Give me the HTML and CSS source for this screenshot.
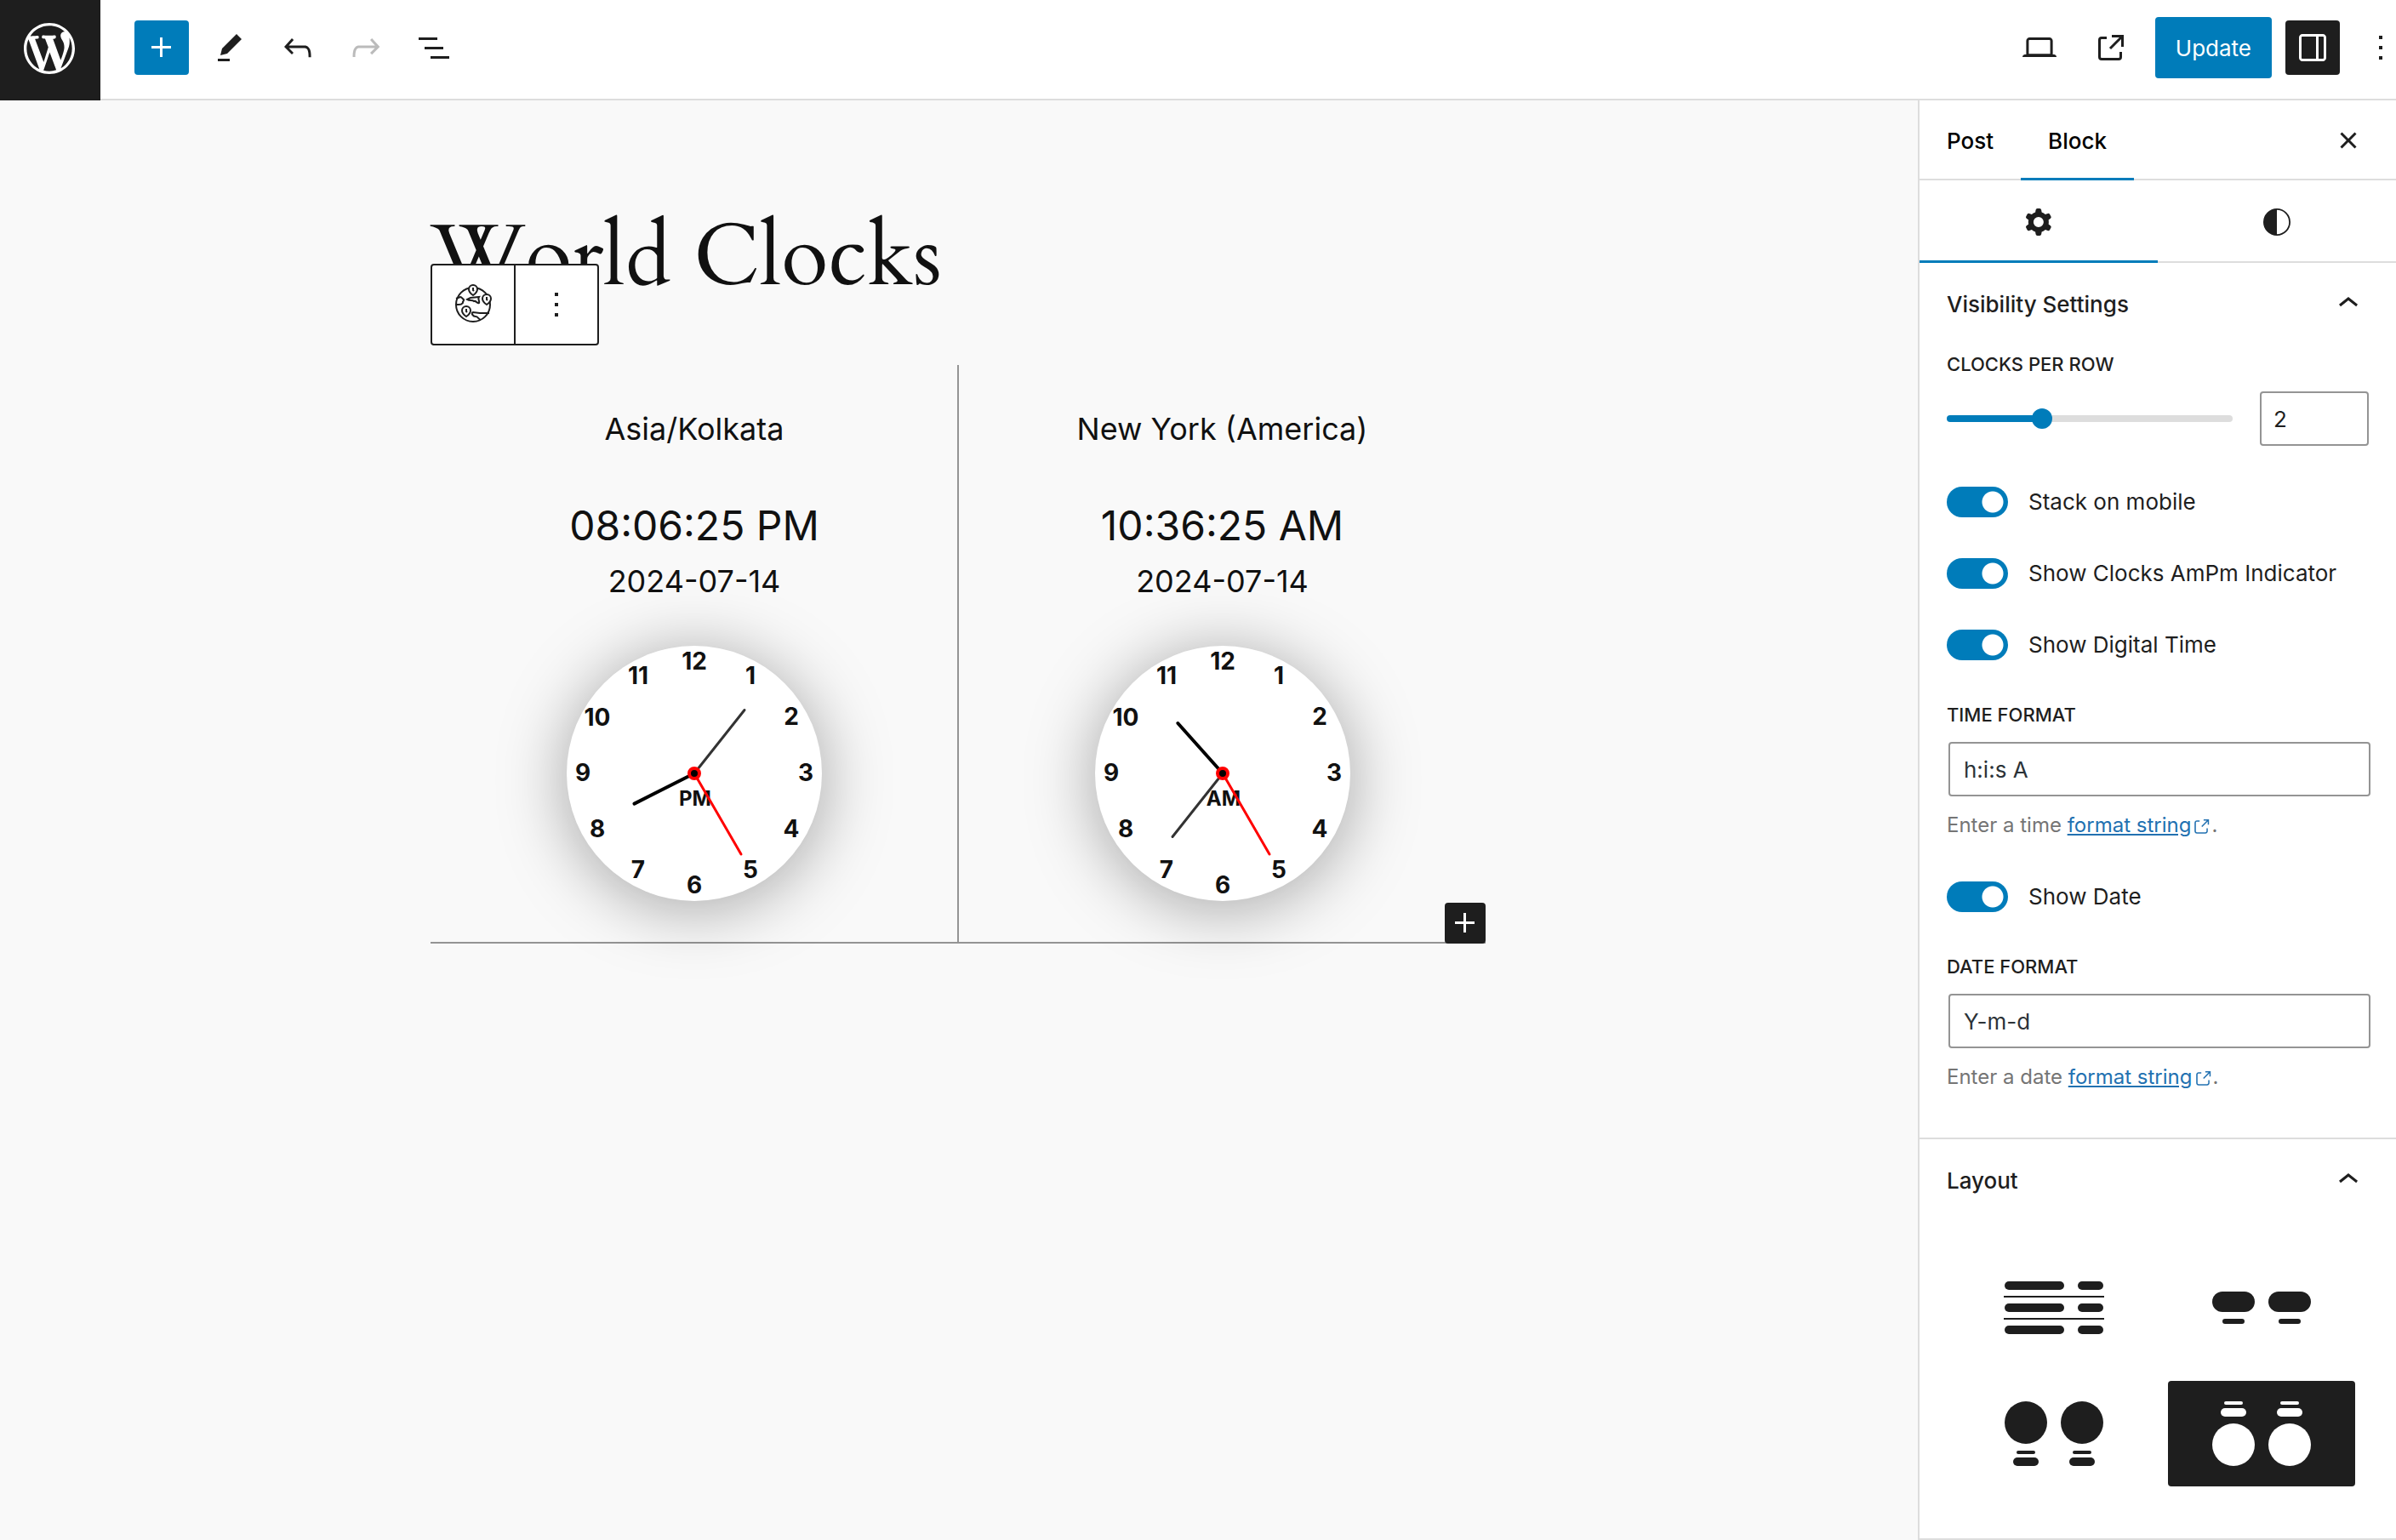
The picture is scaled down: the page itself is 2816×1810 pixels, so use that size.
FILE: index.html
```
<!DOCTYPE html>
<html lang="en">
<head>
<meta charset="utf-8">
<meta name="viewport" content="width=device-width, initial-scale=1">
<title>Edit Post: World Clocks</title>
<link rel="stylesheet" href="styles.css">
</head>
<body>
<div class="editor">
  <header class="topbar">
    <a class="topbar__home" href="#" aria-label="View posts">
      <svg class="logo" viewBox="-2 -2 24 24" aria-hidden="true"><path d="M20 10c0-5.51-4.49-10-10-10C4.48 0 0 4.49 0 10c0 5.52 4.48 10 10 10 5.51 0 10-4.48 10-10zM7.78 15.37L4.37 6.22c.55-.02 1.17-.08 1.17-.08.5-.06.44-1.13-.06-1.11 0 0-1.45.11-2.37.11-.18 0-.37 0-.58-.01C4.12 2.69 6.87 1.11 10 1.11c2.33 0 4.45.87 6.05 2.34-.68-.11-1.65.39-1.65 1.58 0 .74.45 1.36.9 2.1.35.61.55 1.36.55 2.46 0 1.49-1.4 5-1.4 5l-3.03-8.37c.54-.02.82-.17.82-.17.5-.05.44-1.25-.06-1.22 0 0-1.44.12-2.38.12-.87 0-2.33-.12-2.33-.12-.5-.03-.56 1.2-.06 1.22l.92.08 1.26 3.41zM17.41 10c.24-.64.74-1.87.43-4.25.7 1.29 1.05 2.71 1.05 4.25 0 3.29-1.73 6.24-4.4 7.78.97-2.59 1.94-5.2 2.92-7.78zM6.1 18.09C3.12 16.65 1.11 13.53 1.11 10c0-1.3.23-2.48.72-3.59C3.25 10.3 4.67 14.2 6.1 18.09zm4.03-6.63l2.58 6.98c-.86.29-1.76.45-2.71.45-.79 0-1.57-.11-2.29-.33.81-2.38 1.62-4.74 2.42-7.1z"/></svg>
    </a>
    <div class="topbar__tools">
      <button class="icon-btn icon-btn--primary" type="button" aria-label="Toggle block inserter"><svg class="icon" viewBox="0 0 24 24"><path d="M11 12.5V17.5H12.5V12.5H17.5V11H12.5V6H11V11H6V12.5H11Z"/></svg></button>
      <button class="icon-btn" type="button" aria-label="Tools"><svg class="icon" viewBox="0 0 24 24"><path d="m19 7-3-3-8.5 8.5-1 4 4-1L19 7Zm-7 11.5H5V20h7v-1.5Z"/></svg></button>
      <button class="icon-btn" type="button" aria-label="Undo"><svg class="icon" viewBox="0 0 24 24"><path d="M18.3 11.7c-.6-.6-1.4-.9-2.3-.9H6.7l2.9-3.3-1.1-1-4.5 5L8.5 16l1-1-2.7-2.7H16c.5 0 .9.2 1.3.5 1 1 1 3.4 1 4.5v.3h1.5v-.2c0-1.5 0-4.3-1.5-5.7z"/></svg></button>
      <button class="icon-btn" type="button" aria-label="Redo" disabled><svg class="icon" viewBox="0 0 24 24"><path d="M15.6 6.5l-1.1 1 2.9 3.3H8c-.9 0-1.7.3-2.3.9-1.4 1.5-1.4 4.2-1.4 5.6v.2h1.5v-.3c0-1.1 0-3.5 1-4.5.3-.3.7-.5 1.3-.5h9.2L14.5 15l1.1 1.1 4.6-4.6-4.6-5z"/></svg></button>
      <button class="icon-btn" type="button" aria-label="Document overview"><svg class="icon" viewBox="0 0 24 24"><path d="M3 6h11v1.5H3V6Zm3.5 5.5h11V13h-11v-1.5ZM21 17H10v1.5h11V17Z"/></svg></button>
    </div>
    <div class="topbar__settings">
      <div class="topbar__publish">
        <button class="icon-btn" type="button" aria-label="View"><svg class="icon" viewBox="0 0 24 24"><path d="M20.5 16h-.7V8c0-1.1-.9-2-2-2H6.2c-1.1 0-2 .9-2 2v8h-.7c-.8 0-1.5.7-1.5 1.5h20c0-.8-.7-1.5-1.5-1.5zM5.7 8c0-.3.2-.5.5-.5h11.6c.3 0 .5.2.5.5v7.6H5.7V8z"/></svg></button>
        <a class="icon-btn" href="#" aria-label="View post"><svg class="icon" viewBox="0 0 24 24"><path d="M19.5 4.5h-7V6h4.44l-5.97 5.97 1.06 1.06L18 7.06v4.44h1.5v-7Zm-13 1a2 2 0 0 0-2 2v10a2 2 0 0 0 2 2h10a2 2 0 0 0 2-2v-3H17v3a.5.5 0 0 1-.5.5h-10a.5.5 0 0 1-.5-.5v-10a.5.5 0 0 1 .5-.5h3V5.5h-3Z"/></svg></a>
        <button class="update-btn" type="button">Update</button>
      </div>
      <button class="icon-btn icon-btn--pressed" type="button" aria-label="Settings" aria-pressed="true"><svg class="icon" viewBox="0 0 24 24"><path fill-rule="evenodd" d="M18 4H6c-1.1 0-2 .9-2 2v12c0 1.1.9 2 2 2h12c1.1 0 2-.9 2-2V6c0-1.1-.9-2-2-2zm-4 14.5H6c-.3 0-.5-.2-.5-.5V6c0-.3.2-.5.5-.5h8v13zm4.5-.5c0 .3-.2.5-.5.5h-2.5v-13H18c.3 0 .5.2.5.5v12z"/></svg></button>
      <button class="icon-btn" type="button" aria-label="Options"><svg class="icon" viewBox="0 0 24 24"><path d="M13 19h-2v-2h2v2zm0-6h-2v-2h2v2zm0-6h-2V5h2v2z"/></svg></button>
    </div>
  </header>

  <div class="workspace">
    <main class="canvas">
      <article class="post">
        <h1 class="post__title">World Clocks</h1>
        <section class="clocks">
          <div class="block-toolbar" role="toolbar" aria-label="Block tools">
            <button class="block-toolbar__btn" type="button" aria-label="World Clock">
              <svg class="icon icon--line" viewBox="0 0 48 48">
                <circle cx="24" cy="24" r="20"/>
                <path d="M4 17l5-2c2 0 2 2 4 3 1 2-2 2-1 4-2 3-4 2-8 2"/>
                <path d="M17 18l4-2 10-1c-2 3 1 4 0 7-3 1-3-3-6-2-2-2-5 0-8-2z"/>
                <path d="M43 34H32l-8-1c-3 1 0 5 3 5 3 0 3 3 6 4"/>
                <path class="pin" d="M24 13c-3-2-5-4-5-7a5 5 0 0 1 10 0c0 3-2 5-5 7z"/>
                <path class="pin" d="M40 24c-3-2-5-4-5-7a5 5 0 0 1 10 0c0 3-2 5-5 7z"/>
                <path class="pin" d="M16 38c-3-2-5-4-5-7a5 5 0 0 1 10 0c0 3-2 5-5 7z"/>
                <path d="M24 4v3l1 1M40 15v3l1 1M16 29v3l1 1"/>
              </svg>
            </button>
            <button class="block-toolbar__btn" type="button" aria-label="Options"><svg class="icon" viewBox="0 0 24 24"><path d="M13 19h-2v-2h2v2zm0-6h-2v-2h2v2zm0-6h-2V5h2v2z"/></svg></button>
          </div>

          <div class="clock">
            <div class="clock__name">Asia/Kolkata</div>
            <div class="clock__time">08:06:25 PM</div>
            <div class="clock__date">2024-07-14</div>
            <svg class="clock__face" viewBox="-150 -150 300 300" role="img" aria-label="Clock showing 8:06 PM">
              <g class="numerals">
                <text x="0" y="-122">12</text><text x="66" y="-105">1</text><text x="114" y="-57">2</text><text x="131" y="9">3</text><text x="114" y="75">4</text><text x="66" y="123">5</text><text x="0" y="141">6</text><text x="-66" y="123">7</text><text x="-114" y="75">8</text><text x="-131" y="9">9</text><text x="-114" y="-56">10</text><text x="-66" y="-105">11</text>
              </g>
              <text class="ampm" x="1" y="38">PM</text>
              <path class="hand hand--hour" d="M0 0L-70.5 35.6"/>
              <path class="hand hand--minute" d="M0 0L59 -74.5"/>
              <path class="hand hand--second" d="M0 0L55 95"/>
              <circle class="hub" r="6"/>
            </svg>
          </div>

          <div class="clock">
            <div class="clock__name">New York (America)</div>
            <div class="clock__time">10:36:25 AM</div>
            <div class="clock__date">2024-07-14</div>
            <svg class="clock__face" viewBox="-150 -150 300 300" role="img" aria-label="Clock showing 10:36 AM">
              <g class="numerals">
                <text x="0" y="-122">12</text><text x="66" y="-105">1</text><text x="114" y="-57">2</text><text x="131" y="9">3</text><text x="114" y="75">4</text><text x="66" y="123">5</text><text x="0" y="141">6</text><text x="-66" y="123">7</text><text x="-114" y="75">8</text><text x="-131" y="9">9</text><text x="-114" y="-56">10</text><text x="-66" y="-105">11</text>
              </g>
              <text class="ampm" x="1" y="38">AM</text>
              <path class="hand hand--hour" d="M0 0L-52.7 -59"/>
              <path class="hand hand--minute" d="M0 0L-59 74.5"/>
              <path class="hand hand--second" d="M0 0L55 95"/>
              <circle class="hub" r="6"/>
            </svg>
          </div>

          <button class="appender" type="button" aria-label="Add clock"><svg class="icon" viewBox="0 0 24 24"><path d="M11 12.5V17.5H12.5V12.5H17.5V11H12.5V6H11V11H6V12.5H11Z"/></svg></button>
        </section>
      </article>
    </main>

    <aside class="sidebar">
      <div class="tabs">
        <button class="tab" type="button">Post</button>
        <button class="tab tab--active" type="button">Block</button>
        <button class="icon-btn tabs__close" type="button" aria-label="Close settings"><svg class="icon" viewBox="0 0 24 24"><path d="M12 13.06l3.712 3.713 1.061-1.06L13.061 12l3.712-3.712-1.06-1.06L12 10.938 8.288 7.227l-1.061 1.06L10.939 12l-3.712 3.712 1.06 1.061L12 13.061z"/></svg></button>
      </div>
      <div class="icon-tabs">
        <button class="icon-tab icon-tab--active" type="button" aria-label="Settings"><svg class="icon" viewBox="0 0 24 24"><path fill-rule="evenodd" d="M10.289 4.836A1 1 0 0111.275 4h1.306a1 1 0 01.987.836l.244 1.466c.787.26 1.503.679 2.108 1.218l1.393-.522a1 1 0 011.216.437l.653 1.13a1 1 0 01-.23 1.273l-1.148.944a6.025 6.025 0 010 2.435l1.149.946a1 1 0 01.23 1.272l-.653 1.13a1 1 0 01-1.216.437l-1.394-.522c-.605.54-1.32.958-2.108 1.218l-.244 1.466a1 1 0 01-.987.836h-1.306a1 1 0 01-.986-.836l-.244-1.466a5.995 5.995 0 01-2.108-1.218l-1.394.522a1 1 0 01-1.217-.436l-.653-1.131a1 1 0 01.23-1.272l1.149-.946a6.026 6.026 0 010-2.435l-1.148-.944a1 1 0 01-.23-1.272l.653-1.131a1 1 0 011.217-.437l1.393.522a5.994 5.994 0 012.108-1.218l.244-1.466zM14.929 12a3 3 0 11-6 0 3 3 0 016 0z"/></svg></button>
        <button class="icon-tab" type="button" aria-label="Styles"><svg class="icon" viewBox="0 0 24 24"><path fill-rule="evenodd" d="M20 12a8 8 0 1 1-16 0 8 8 0 0 1 16 0Zm-.9 0a7.1 7.1 0 0 1-7.1 7.1V4.9a7.1 7.1 0 0 1 7.1 7.1Z"/></svg></button>
      </div>

      <section class="panel">
        <h2 class="panel__heading"><button class="panel__toggle" type="button" aria-expanded="true">Visibility Settings<svg class="icon" viewBox="0 0 24 24"><path d="M6.5 12.4L12 8l5.5 4.4-.9 1.2L12 10l-4.5 3.6-1-1.2z"/></svg></button></h2>
        <div class="panel__body">
          <div class="field">
            <label class="field__label" for="per-row">Clocks per row</label>
            <div class="range">
              <div class="range__track">
                <span class="range__rail"></span>
                <input class="range__input" id="per-row" type="range" min="1" max="4" value="2">
              </div>
              <input class="text-input range__number" type="text" inputmode="numeric" value="2" aria-label="Clocks per row value">
            </div>
          </div>
          <label class="toggle"><input class="toggle__input" type="checkbox" checked>Stack on mobile</label>
          <label class="toggle"><input class="toggle__input" type="checkbox" checked>Show Clocks AmPm Indicator</label>
          <label class="toggle"><input class="toggle__input" type="checkbox" checked>Show Digital Time</label>
          <div class="field">
            <label class="field__label" for="time-format">Time format</label>
            <input class="text-input text-input--format" id="time-format" type="text" value="h:i:s A">
            <p class="help">Enter a time <a class="help__link" href="#">format string</a><svg class="help__icon" viewBox="0 0 24 24" aria-hidden="true"><path d="M18.2 17c0 .7-.6 1.2-1.2 1.2H7c-.7 0-1.2-.6-1.2-1.2V7c0-.7.6-1.2 1.2-1.2h3.2V4.2H7C5.5 4.2 4.2 5.5 4.2 7v10c0 1.500 1.200 2.800 2.800 2.800h10c1.500 0 2.800-1.200 2.800-2.800v-3.600h-1.500V17zM14.900 3v1.500h3.700l-6.400 6.400 1.100 1.100 6.400-6.400v3.700h1.500V3h-6.300z"/></svg>.</p>
          </div>
          <label class="toggle"><input class="toggle__input" type="checkbox" checked>Show Date</label>
          <div class="field">
            <label class="field__label" for="date-format">Date format</label>
            <input class="text-input text-input--format" id="date-format" type="text" value="Y-m-d">
            <p class="help">Enter a date <a class="help__link" href="#">format string</a><svg class="help__icon" viewBox="0 0 24 24" aria-hidden="true"><path d="M18.2 17c0 .7-.6 1.2-1.2 1.2H7c-.7 0-1.2-.6-1.2-1.2V7c0-.7.6-1.2 1.2-1.2h3.2V4.2H7C5.5 4.2 4.2 5.5 4.2 7v10c0 1.500 1.200 2.800 2.800 2.800h10c1.500 0 2.800-1.200 2.800-2.800v-3.600h-1.500V17zM14.900 3v1.500h3.700l-6.400 6.400 1.100 1.100 6.400-6.400v3.700h1.500V3h-6.300z"/></svg>.</p>
          </div>
        </div>
      </section>

      <section class="panel">
        <h2 class="panel__heading"><button class="panel__toggle" type="button" aria-expanded="true">Layout<svg class="icon" viewBox="0 0 24 24"><path d="M6.5 12.4L12 8l5.5 4.4-.9 1.2L12 10l-4.5 3.6-1-1.2z"/></svg></button></h2>
        <div class="layouts">
          <button class="layout-btn" type="button" aria-label="List">
            <svg class="layout-btn__art" viewBox="0 0 120 80"><rect x="2" y="9" width="70" height="10" rx="5"/><rect x="88" y="9" width="30" height="10" rx="5"/><rect x="1" y="26" width="118" height="2"/><rect x="2" y="35" width="70" height="10" rx="5"/><rect x="88" y="35" width="30" height="10" rx="5"/><rect x="1" y="52" width="118" height="2"/><rect x="2" y="61" width="70" height="10" rx="5"/><rect x="88" y="61" width="30" height="10" rx="5"/></svg>
          </button>
          <button class="layout-btn" type="button" aria-label="Digital">
            <svg class="layout-btn__art" viewBox="0 0 120 80"><rect x="2" y="21" width="50" height="24" rx="12"/><rect x="68" y="21" width="50" height="24" rx="12"/><rect x="14" y="53" width="26" height="6" rx="3"/><rect x="80" y="53" width="26" height="6" rx="3"/></svg>
          </button>
          <button class="layout-btn" type="button" aria-label="Clock above text">
            <svg class="layout-btn__art" viewBox="0 0 120 80"><circle cx="27" cy="27" r="25"/><circle cx="93" cy="27" r="25"/><rect x="16" y="60" width="22" height="4" rx="2"/><rect x="82" y="60" width="22" height="4" rx="2"/><rect x="12" y="68" width="30" height="10" rx="5"/><rect x="78" y="68" width="30" height="10" rx="5"/></svg>
          </button>
          <button class="layout-btn layout-btn--active" type="button" aria-label="Clock below text" aria-pressed="true">
            <svg class="layout-btn__art" viewBox="0 0 120 80"><rect x="16" y="2" width="22" height="4" rx="2"/><rect x="82" y="2" width="22" height="4" rx="2"/><rect x="12" y="10" width="30" height="10" rx="5"/><rect x="78" y="10" width="30" height="10" rx="5"/><circle cx="27" cy="53" r="25"/><circle cx="93" cy="53" r="25"/></svg>
          </button>
        </div>
      </section>
    </aside>
  </div>
</div>
</body>
</html>
```
FILE: styles.css
```
:root {
  --ink: #1e1e1e;
  --accent: #007cba;
  --line: #dddddd;
  --field-line: #949494;
}

* { box-sizing: border-box; }

body {
  margin: 0;
  font-family: Inter, "Liberation Sans", sans-serif;
  font-size: 26px;
  color: var(--ink);
  background: #fff;
  overflow-x: hidden;
}

button, input { font: inherit; color: inherit; }
button { margin: 0; padding: 0; border: 0; background: none; }

.editor { display: flex; flex-direction: column; min-height: 100vh; }

.icon { display: block; width: 48px; height: 48px; fill: currentColor; }

/* Top bar */
.topbar {
  display: flex;
  align-items: center;
  height: 118px;
  border-bottom: 2px solid var(--line);
}
.topbar__home {
  display: flex;
  align-items: center;
  justify-content: center;
  width: 118px;
  height: 118px;
  margin-bottom: -2px;
  padding: 0 2px 4px 0;
  background: var(--ink);
}
.logo { width: 72px; height: 72px; fill: #fff; }
.topbar__tools {
  display: flex;
  gap: 16px;
  padding: 0 40px 4px;
}
.topbar__settings {
  display: flex;
  align-items: center;
  gap: 16px;
  margin: 0 -14px 0 auto;
  padding-bottom: 4px;
}
.topbar__publish { display: flex; align-items: center; gap: 20px; }

.icon-btn {
  display: flex;
  align-items: center;
  justify-content: center;
  width: 64px;
  height: 64px;
  border-radius: 4px;
  color: var(--ink);
}
.icon-btn:disabled { color: #bbbbbb; }
.icon-btn--primary { background: var(--accent); color: #fff; }
.icon-btn--pressed { background: var(--ink); color: #fff; }
.update-btn {
  height: 72px;
  padding: 0 24px;
  border-radius: 4px;
  background: var(--accent);
  color: #fff;
}

/* Workspace */
.workspace { display: flex; flex: 1; }
.canvas { flex: 1; min-width: 0; padding: 125px 2px 0 0; background: #f9f9f9; color: #111; }
.post { max-width: 1240px; margin: 0 auto; }
.post__title {
  margin: 0 0 66px;
  font-family: Cardo, "Liberation Serif", serif;
  font-size: 101px;
  font-weight: 400;
  line-height: 120px;
}

.clocks {
  position: relative;
  display: grid;
  grid-template-columns: 1fr 1fr;
  border-bottom: 2px solid var(--field-line);
}
.clock {
  display: flex;
  flex-direction: column;
  align-items: center;
  padding: 53px 0 48px;
}
.clock + .clock { border-left: 2px solid var(--field-line); margin-left: -1px; }
.clock__name { font-size: 36px; line-height: 44px; }
.clock__time { margin-top: 62px; font-size: 48px; line-height: 60px; }
.clock__date { margin-top: 13px; font-size: 36px; line-height: 44px; }
.clock__face {
  width: 300px;
  height: 300px;
  margin-top: 54px;
  border-radius: 50%;
  background: #fff;
  box-shadow: 0 8px 80px rgba(0, 0, 0, 0.35);
}
.numerals { font-size: 28px; font-weight: 700; text-anchor: middle; fill: #111; }
.ampm { font-size: 24px; font-weight: 700; text-anchor: middle; fill: #111; }
.hand { fill: none; stroke-linecap: round; }
.hand--hour { stroke: #000; stroke-width: 4; }
.hand--minute { stroke: #333; stroke-width: 3; }
.hand--second { stroke: #f00; stroke-width: 3; }
.hub { fill: #000; stroke: #f00; stroke-width: 4; }

.block-toolbar {
  position: absolute;
  left: 0;
  bottom: calc(100% + 23px);
  display: flex;
  border: 2px solid var(--ink);
  border-radius: 4px;
  background: #fff;
  color: var(--ink);
}
.block-toolbar__btn {
  display: flex;
  align-items: center;
  justify-content: center;
  box-sizing: content-box;
  width: 96px;
  height: 92px;
}
.block-toolbar__btn + .block-toolbar__btn { border-left: 2px solid var(--ink); }
.icon--line { overflow: visible; fill: none; stroke: currentColor; stroke-width: 2; }
.pin { fill: #fff; }

.appender {
  position: absolute;
  right: 0;
  bottom: -2px;
  border-radius: 4px;
  background: var(--ink);
  color: #fff;
}

/* Sidebar */
.sidebar { width: 562px; border-left: 2px solid var(--line); background: #fff; }
.tabs {
  display: flex;
  align-items: center;
  height: 94px;
  box-shadow: inset 0 -2px var(--line);
}
.tab { height: 94px; padding: 0 32px; font-weight: 500; color: #000; }
.tab--active { box-shadow: inset 0 -3px var(--accent); }
.tabs__close { margin: 0 24px 0 auto; }
.icon-tabs { display: flex; height: 97px; box-shadow: inset 0 -2px var(--line); }
.icon-tab { display: flex; flex: 1; align-items: center; justify-content: center; }
.icon-tab--active { box-shadow: inset 0 -3px var(--accent); }

.panel { border-bottom: 2px solid var(--line); }
.panel__heading { margin: 0; font-size: 26px; font-weight: 500; }
.panel__toggle {
  display: flex;
  align-items: center;
  justify-content: space-between;
  width: 100%;
  height: 96px;
  padding: 0 32px;
}
.panel__body {
  display: flex;
  flex-direction: column;
  gap: 48px;
  padding: 7px 32px 53px;
}
.field__label {
  display: block;
  margin-bottom: 16px;
  font-size: 22px;
  font-weight: 500;
  line-height: 32px;
  text-transform: uppercase;
}
.text-input {
  display: block;
  height: 64px;
  padding: 0 16px;
  border: 2px solid var(--field-line);
  border-radius: 4px;
  background: #fff;
}
.text-input--format { width: 100%; margin-left: 2px; color: #2c3338; }

.range { display: flex; align-items: center; gap: 32px; }
.range__track { display: grid; flex: 1; align-items: center; min-width: 0; }
.range__rail, .range__input { grid-area: 1 / 1; }
.range__rail {
  height: 8px;
  border-radius: 4px;
  background: linear-gradient(to right, var(--accent) 33%, var(--line) 33%);
}
.range__input {
  height: 24px;
  margin: 0 -12px;
  appearance: none;
  background: none;
}
.range__input::-webkit-slider-thumb {
  appearance: none;
  width: 24px;
  height: 24px;
  border-radius: 50%;
  background: var(--accent);
}
.range__number { width: 128px; padding: 0 14px; }

.toggle { display: flex; align-items: center; gap: 24px; line-height: 36px; }
.toggle__input {
  appearance: none;
  width: 72px;
  height: 36px;
  margin: 0;
  border-radius: 18px;
  background: radial-gradient(circle at 54px 18px, #fff 12px, var(--accent) 13px);
}

.help {
  margin: 16px 0 0;
  font-size: 24px;
  line-height: 36px;
  color: #757575;
}
.help__link { color: #2271b1; }
.help__icon {
  width: 24px;
  height: 24px;
  vertical-align: -6px;
  fill: #2271b1;
}

.layouts {
  display: grid;
  grid-template-columns: 1fr 1fr;
  gap: 24px;
  padding: 40px 48px 61px;
}
.layout-btn {
  display: flex;
  align-items: center;
  justify-content: center;
  height: 124px;
  border-radius: 4px;
}
.layout-btn--active { background: var(--ink); color: #fff; }
.layout-btn__art { width: 120px; height: 80px; fill: currentColor; }
```
